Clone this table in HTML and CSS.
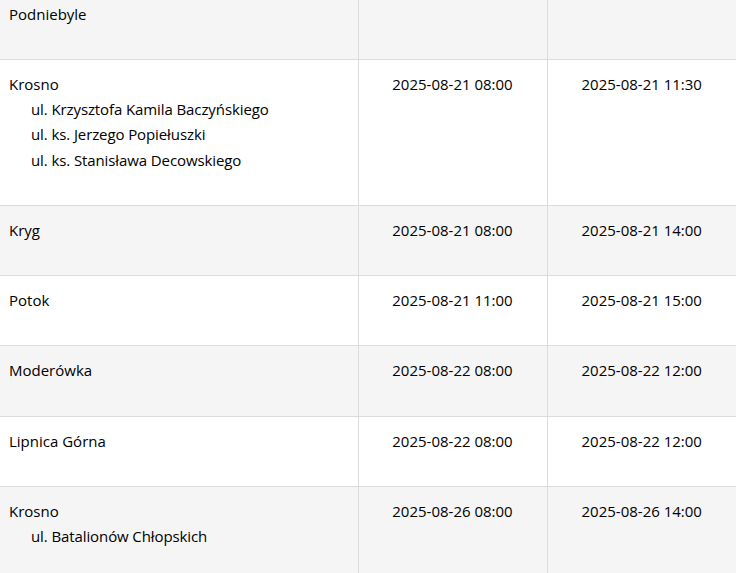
FILE: index.html
```html
<!DOCTYPE html>
<html lang="pl">
<head>
<meta charset="utf-8">
<link rel="stylesheet" href="styles.css">
</head>
<body>
<table class="schedule">
  <colgroup>
    <col class="c-place">
    <col class="c-date">
    <col class="c-date">
  </colgroup>
  <tbody>
    <tr class="alt">
      <td class="place">Podniebyle</td>
      <td class="date"></td>
      <td class="date"></td>
    </tr>
    <tr>
      <td class="place">Krosno
        <div class="street">ul. Krzysztofa Kamila Baczyńskiego</div>
        <div class="street">ul. ks. Jerzego Popiełuszki</div>
        <div class="street">ul. ks. Stanisława Decowskiego</div>
      </td>
      <td class="date">2025-08-21 08:00</td>
      <td class="date">2025-08-21 11:30</td>
    </tr>
    <tr class="alt">
      <td class="place">Kryg</td>
      <td class="date">2025-08-21 08:00</td>
      <td class="date">2025-08-21 14:00</td>
    </tr>
    <tr>
      <td class="place">Potok</td>
      <td class="date">2025-08-21 11:00</td>
      <td class="date">2025-08-21 15:00</td>
    </tr>
    <tr class="alt">
      <td class="place">Moderówka</td>
      <td class="date">2025-08-22 08:00</td>
      <td class="date">2025-08-22 12:00</td>
    </tr>
    <tr>
      <td class="place">Lipnica Górna</td>
      <td class="date">2025-08-22 08:00</td>
      <td class="date">2025-08-22 12:00</td>
    </tr>
    <tr class="alt">
      <td class="place">Krosno
        <div class="street">ul. Batalionów Chłopskich</div>
      </td>
      <td class="date">2025-08-26 08:00</td>
      <td class="date">2025-08-26 14:00</td>
    </tr>
  </tbody>
</table>
</body>
</html>
```
FILE: styles.css
```css
html, body {
  margin: 0;
  padding: 0;
  background: #ffffff;
}

body {
  font-family: "Open Sans", "Noto Sans", "Liberation Sans", sans-serif;
  font-size: 15px;
  color: #000000;
}

.schedule {
  width: 736px;
  border-collapse: collapse;
  table-layout: fixed;
  margin-top: -10.5px;
}

.c-place { width: 358px; }
.c-date { width: 189px; }

.schedule td {
  vertical-align: top;
  line-height: 25.25px;
  padding: 12px 9px 32px;
  border-bottom: 1px solid #dcdcdc;
}

.schedule td + td {
  border-left: 1px solid #dcdcdc;
}

.schedule tr.alt td {
  background: #f5f5f5;
}

.date {
  text-align: center;
}

.street {
  padding-left: 22px;
  letter-spacing: -0.1px;
}
```
